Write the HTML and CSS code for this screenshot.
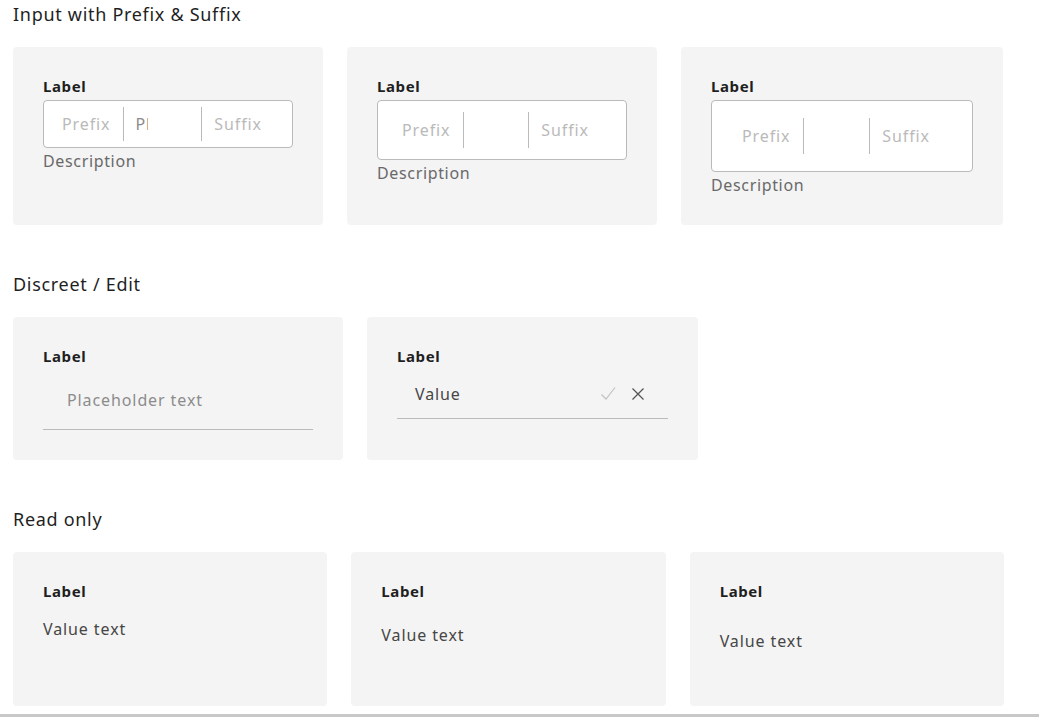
FILE: index.html
```html
<!DOCTYPE html>
<html lang="en">
<head>
<meta charset="utf-8">
<title>Inputs</title>
<link rel="stylesheet" href="styles.css">
</head>
<body>
<div class="page">
  <section class="section">
    <h2 class="section-title">Input with Prefix &amp; Suffix</h2>
    <div class="row">
      <div class="card">
        <div class="label">Label</div>
        <div class="box box-s">
          <span class="affix prefix">Prefix</span>
          <span class="sep"></span>
          <span class="field"><input class="field-input" type="text" placeholder="Placeholder"></span>
          <span class="sep"></span>
          <span class="affix suffix">Suffix</span>
        </div>
        <div class="desc">Description</div>
      </div>
      <div class="card">
        <div class="label">Label</div>
        <div class="box box-m">
          <span class="affix prefix">Prefix</span>
          <span class="sep"></span>
          <span class="field"></span>
          <span class="sep"></span>
          <span class="affix suffix">Suffix</span>
        </div>
        <div class="desc">Description</div>
      </div>
      <div class="card">
        <div class="label">Label</div>
        <div class="box box-l">
          <span class="affix prefix">Prefix</span>
          <span class="sep"></span>
          <span class="field"></span>
          <span class="sep"></span>
          <span class="affix suffix">Suffix</span>
        </div>
        <div class="desc">Description</div>
      </div>
    </div>
  </section>

  <section class="section">
    <h2 class="section-title">Discreet / Edit</h2>
    <div class="row">
      <div class="card card-discreet">
        <div class="label">Label</div>
        <div class="discreet discreet-m">
          <span class="placeholder">Placeholder text</span>
        </div>
      </div>
      <div class="card card-discreet">
        <div class="label">Label</div>
        <div class="discreet discreet-s">
          <span class="value">Value</span>
          <span class="actions">
            <svg class="icon" width="16" height="16" viewBox="0 0 16 16" aria-hidden="true"><path d="M1.5 8.5 L6 13 L15 1.5" fill="none" stroke="#c2c2c2" stroke-width="1.2"/></svg>
            <svg class="icon" width="16" height="16" viewBox="0 0 16 16" aria-hidden="true"><path d="M2.5 2.5 L13.5 13.5 M13.5 2.5 L2.5 13.5" fill="none" stroke="#555555" stroke-width="1.3"/></svg>
          </span>
        </div>
      </div>
    </div>
  </section>

  <section class="section">
    <h2 class="section-title">Read only</h2>
    <div class="grid3">
      <div class="card card-ro">
        <div class="label">Label</div>
        <div class="readonly ro-s">Value text</div>
      </div>
      <div class="card card-ro">
        <div class="label">Label</div>
        <div class="readonly ro-m">Value text</div>
      </div>
      <div class="card card-ro">
        <div class="label">Label</div>
        <div class="readonly ro-l">Value text</div>
      </div>
    </div>
  </section>
  <div class="bottom-bar"></div>
</div>
</body>
</html>
```

FILE: styles.css
```css
* { box-sizing: border-box; }

html, body {
  margin: 0;
  padding: 0;
  background: #ffffff;
}

body {
  font-family: "Noto Sans", "Open Sans", sans-serif;
  color: #1f1f1f;
}

.page {
  padding: 2px 0 0 13px;
}

.section {
  width: 991px;
  margin-bottom: 47px;
}

.section:last-of-type {
  margin-bottom: 0;
}

.section-title {
  margin: 0 0 21px;
  font-size: 18px;
  line-height: 24px;
  font-weight: 400;
  letter-spacing: 0.7px;
  color: #1f1f1f;
}

.row {
  display: flex;
  gap: 24px;
  align-items: stretch;
}

.grid3 {
  display: grid;
  grid-template-columns: 1fr 1fr 1fr;
  gap: 24px;
}

.card {
  background: #f4f4f4;
  border-radius: 4px;
  padding: 29px 30px 30px;
}

.card-discreet {
  padding-bottom: 30px;
}

.card-ro {
  padding-bottom: 29px;
}

.label {
  font-size: 15px;
  line-height: 20px;
  font-weight: 700;
  letter-spacing: 0.6px;
  color: #1f1f1f;
  margin-bottom: 4px;
}

/* prefix / suffix box */
.box {
  display: flex;
  align-items: center;
  background: #ffffff;
  border: 1px solid #bababa;
  border-radius: 4px;
  font-size: 16px;
  letter-spacing: 0.9px;
}

.box-s { width: 250px; height: 48px; }
.box-m { width: 250px; height: 60px; }
.box-l { width: 262px; height: 72px; }

.affix {
  color: #bababa;
  white-space: nowrap;
}

.box .prefix { padding-right: 12px; }
.box .suffix { padding-left: 12px; }
.box-s .prefix { padding-left: 18px; }
.box-m .prefix { padding-left: 24px; }
.box-l .prefix { padding-left: 30px; }
.box-s .suffix { padding-right: 30px; }
.box-m .suffix { padding-right: 37px; }
.box-l .suffix { padding-right: 42px; }

.sep {
  width: 1px;
  height: 36px;
  background: #bababa;
  flex: none;
}

.box-s .sep { height: 34px; }

.field {
  flex: 1;
  display: flex;
  align-items: center;
  padding-left: 12px;
}

.field-input {
  width: 12px;
  padding: 0;
  margin: 0;
  border: 0;
  outline: none;
  background: transparent;
  font: inherit;
  font-size: 16px;
  letter-spacing: 0.9px;
  color: #464646;
}

.field-input::placeholder {
  color: #8c8c8c;
  opacity: 1;
}

.desc {
  margin-top: 3px;
  font-size: 16px;
  line-height: 20px;
  color: #696969;
  letter-spacing: 0.65px;
}

/* discreet */
.card-discreet {
  width: 330px;
}

.card-discreet + .card-discreet { width: 331px; }

.discreet {
  display: flex;
  align-items: center;
  border-bottom: 1px solid #bababa;
  font-size: 16px;
  letter-spacing: 0.9px;
}

.discreet-m { height: 60px; padding: 0 24px; }
.discreet-s { height: 49px; padding: 0 22px 0 18px; }

.placeholder { color: #8c8c8c; }
.value { color: #464646; flex: 1; }

.actions {
  display: flex;
  gap: 14px;
  align-items: center;
}

.icon { display: block; }

/* read only */
.readonly {
  display: flex;
  align-items: center;
  font-size: 16px;
  color: #464646;
  letter-spacing: 0.9px;
}

.ro-s { height: 48px; }
.ro-m { height: 60px; }
.ro-l { height: 72px; }

.bottom-bar {
  margin: 8px 0 0 -13px;
  height: 4px;
  background: #c8c8c8;
}
```
